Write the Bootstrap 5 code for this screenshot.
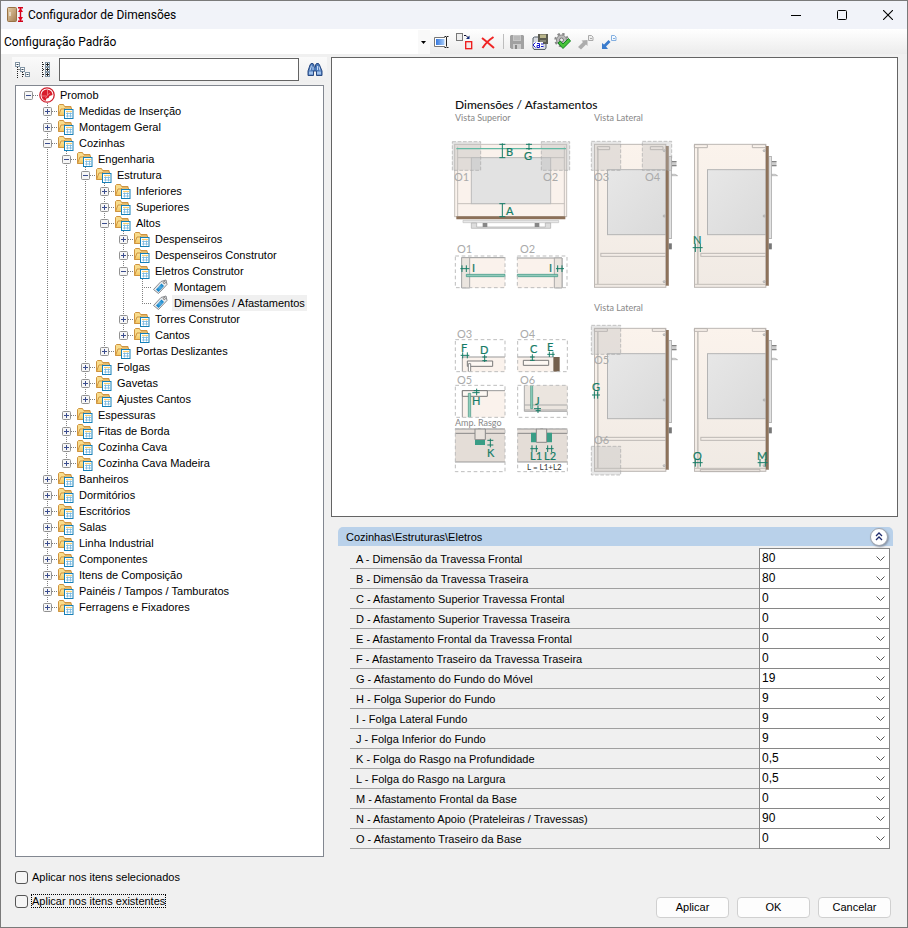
<!DOCTYPE html>
<html lang="pt-BR">
<head>
<meta charset="utf-8">
<meta name="viewport" content="width=device-width, initial-scale=1">
<title>Configurador de Dimensões</title>
<link href="https://cdn.jsdelivr.net/npm/bootstrap@5.3.0/dist/css/bootstrap.min.css" rel="stylesheet">
<style>
  body { font-family: "Liberation Sans", Arial, sans-serif; font-size: 11px; line-height: 16px; color: #000; background: #f0f0f0; }
  .app-window { border: 1px solid #7a7a7a; }
  .title-strip { height: 28px; background: #f1f3f9; font-family: Roboto, sans-serif; font-size: 12px; padding-left: 6px; }
  .title-strip .btn { width: 38px; height: 28px; }
  .btn { --bs-btn-font-size: 11px; --bs-btn-line-height: 16px; }
  .tool-strip { display: grid; grid-template-columns: 429fr 477fr; height: 25px; background: linear-gradient(#fff, #ececec); }
  .config-select { appearance: none; border: 0; border-radius: 0; padding: 0 16px 0 3px; font-family: Roboto, sans-serif; font-size: 12px; line-height: 24px; color: #000; background: #fff url("data:image/svg+xml,%3Csvg xmlns='http://www.w3.org/2000/svg' width='12' height='24'%3E%3Cpath fill='%23f9f9f9' d='M0 0h12v24H0z'/%3E%3Cpath d='M3 11h5L5.500 14z'/%3E%3C/svg%3E") right center no-repeat; }
  .tool-btn { width: 23px; height: 24px; }
  .tool-rule { width: 1px; height: 15px; margin: 0 1px 0 4px; background: #bdbdbd; }
  .work-area { display: grid; grid-template-columns: minmax(0, 309fr) minmax(0, 567fr); gap: 7px; padding: 3px 9px 0 14px; }
  .search-strip { height: 25px; margin: 0 -3px 3px; padding: 1px 3px; background: linear-gradient(#fafafa, #efefef); }
  .search-strip input { height: 23px; border: 1px solid #646464; border-radius: 0; font-size: 11px; padding: 0 4px; }
  .tree-box { background: #fff; border: 1px solid #828790; padding: 1px 0 0 8px; }
  .tree, .tree ul { list-style: none; margin: 0; padding: 0; }
  .tree ul { padding-left: 19px; }
  .tree ul > li { background: repeating-linear-gradient(#808080 0 1px, transparent 1px 2px) 4px 0 / 1px 100% no-repeat; }
  .tree ul > li:last-child { background-size: 1px 8px; }
  .node { display: flex; align-items: center; height: 16px; white-space: nowrap; }
  .node::before { content: ""; order: 2; width: 5px; height: 1px; background: repeating-linear-gradient(90deg, #808080 0 1px, transparent 1px 2px); flex: none; }
  .node.leaf::before { width: 10px; margin-left: 4px; }
  .node .btn { order: 1; width: 9px; height: 9px; flex: none; }
  .node .btn svg { display: block; }
  .node > svg { order: 3; width: 18px; height: 16px; flex: none; margin-right: 2px; }
  .node a { order: 4; color: #000; text-decoration: none; padding: 0 2px; line-height: 16px; }
  .node.active a { background: #f0f0f0; }
  .figure-box { background: #fff; border: 1px solid #646464; }
  .figure-box svg { display: block; width: 100%; height: auto; }
  .group-head { margin: 10px 5px 3px 7px; height: 19px; padding: 0 5px 0 8px; background: #b9d1ea; border-radius: 5px 5px 0 0; }
  .fold-btn { width: 18px; height: 18px; background: #fff; border: 1px solid #9da3ad; border-radius: 9px; box-shadow: 1px 1px 2px #8895a8; }
  .prop-list { margin: 0 8px 0 19px; }
  .prop-row { display: grid; grid-template-columns: 409fr 131fr; height: 20px; border-bottom: 1px solid #a0a0a0; }
  .prop-row label { line-height: 21px; padding-left: 6px; }
  .prop-row select { height: 21px; margin-top: -1px; appearance: none; border: 1px solid #868686; border-radius: 0; padding: 0 16px 1px 2px; font-size: 12px; line-height: 18px; color: #000; background: #fff url("data:image/svg+xml,%3Csvg xmlns='http://www.w3.org/2000/svg' width='9' height='6'%3E%3Cpath d='M.5.500l4 4 4-4' fill='none' stroke='%23555'/%3E%3C/svg%3E") right 4px center no-repeat; }
  .bottom-strip { padding: 13px 16px 9px 14px; }
  .check-stack { gap: 10px; margin-bottom: 10px; }
  .bottom-strip .form-check-input { width: 13px; height: 13px; margin: 0 3px 0 0; border: 1px solid #555; border-radius: 3px; background-color: #f5f5f5; }
  .bottom-strip label { line-height: 12px; border: 1px dotted transparent; }
  .bottom-strip .focused label { border-color: #000; }
  .dlg-btn { width: 73px; height: 21px; line-height: 19px; padding: 0; background: #fdfdfd; border: 1px solid #d0d0d0; border-radius: 4px; color: #000; }
  .fig { font-family: Lato, sans-serif; }
  .fig-title { font-size: 12px; font-weight: 500; fill: #111; }
  .fig-sub { font-size: 9px; fill: #888; }
  .fig-num { font-size: 11px; fill: #aaa; }
  .fig-let { font-size: 11px; fill: #167c66; stroke: #167c66; stroke-width: .2px; }
  .fig-eq { font-size: 8px; fill: #333; }
</style>
<script src="https://cdn.jsdelivr.net/npm/bootstrap@5.3.0/dist/js/bootstrap.bundle.min.js"></script>
</head>
<body>
<svg class="position-absolute" width="0" height="0" aria-hidden="true">
  <defs>
    <linearGradient id="gFace" x1="0" y1="0" x2="0" y2="1"><stop offset="0" stop-color="#fbf3ec"/><stop offset="1" stop-color="#f0eae4"/></linearGradient>
    <linearGradient id="gOven" x1="0" y1="0" x2="1" y2="1"><stop offset="0" stop-color="#e7e7e7"/><stop offset="1" stop-color="#dadada"/></linearGradient>
    <linearGradient id="gFold" x1="0" y1="0" x2="0" y2="1"><stop offset="0" stop-color="#fce9a5"/><stop offset="1" stop-color="#f3c660"/></linearGradient>
    <linearGradient id="gDoor" x1="0" y1="0" x2="1" y2="1"><stop offset="0" stop-color="#e5cfa8"/><stop offset="1" stop-color="#a57d50"/></linearGradient>
    <linearGradient id="gBlue" x1="0" y1="0" x2="1" y2="0"><stop offset="0" stop-color="#3577dd"/><stop offset="1" stop-color="#a9cdf8"/></linearGradient>
    <pattern id="hatch" width="6" height="6" patternUnits="userSpaceOnUse"><path d="M0 0h6v6H0z" fill="#4bab94"/><path d="M0 0l6 6M6 0L0 6" stroke="#16806a"/></pattern>
  </defs>
  <symbol id="minus" viewBox="0 0 9 9"><rect x=".5" y=".5" width="8" height="8" rx="1" fill="#f6f6f6" stroke="#919191"/><path d="M2 4.500h5" stroke="#3b4d8e"/></symbol>
  <symbol id="plus" viewBox="0 0 9 9"><rect x=".5" y=".5" width="8" height="8" rx="1" fill="#f6f6f6" stroke="#919191"/><path d="M2 4.500h5M4.500 2v5" stroke="#3b4d8e"/></symbol>
  <symbol id="folder" viewBox="0 0 18 16">
    <path d="M1.500 12.500v-10l1-1h4l1 2h6.500v4" fill="#f8dc8c" stroke="#cf9440"/>
    <path d="M1.500 12.500l2.500-6.500h3l1-1h6.500v7.500z" fill="url(#gFold)" stroke="#cf9440"/>
    <rect x="7.500" y="6.500" width="8.500" height="9" fill="#fff" stroke="#1680b8"/>
    <path d="M9 8.500h6" stroke="#f6cd70" stroke-width="1.200"/><path d="M9 10.500h6M9 13h6M10.500 9.500v5M13.500 9.500v5" stroke="#72b6df" stroke-width=".8"/>
  </symbol>
  <symbol id="tag" viewBox="0 0 18 16">
    <path d="M1.500 10.500L9 2.500l5-1.500 1 4.500-8.500 9z" fill="#e9ebee" stroke="#87898d"/>
    <path d="M4 10.500l5.500-6 2.500 2.500-5.500 6z" fill="#1687cb"/><path d="M6 9.500l3-3M7 10.500l3-3" stroke="#9bd0f2" stroke-width=".8"/><circle cx="12.300" cy="3.500" r="1" fill="#fff" stroke="#777"/>
  </symbol>
  <symbol id="brand" viewBox="0 0 18 16">
    <circle cx="9" cy="8" r="7.200" fill="#fff" stroke="#cf1f2d" stroke-width="1.300"/>
    <path d="M9.500 2.500c3 .5 5 2.500 5 5.500l-3 1-1 2-2 .5-1 2.500C5 13 3.500 11 3.500 8c0-3 2-5.500 6-5.500z" fill="#d81e2c"/><path d="M9.500 3v5l2.500-2M8 9H4M9.500 8l-2 3" stroke="#f69a9e" stroke-width=".7" fill="none"/>
  </symbol>
  <symbol id="cabinet" viewBox="0 0 260 450" overflow="visible">
    <rect x="1" y="1" width="214" height="429" fill="url(#gFace)" stroke="#bdb8b4" stroke-width="3"/>
    <path d="M1 421h214" stroke="#c3beb9" stroke-width="3"/>
    <path d="M11 12v408" stroke="#c9c4bf" stroke-width="5"/>
    <rect x="40" y="77" width="175" height="195" fill="url(#gOven)" stroke="#b4b4b4" stroke-width="3"/>
    <rect x="20" y="328" width="195" height="9" fill="#f3ede7" stroke="#bdb8b4" stroke-width="3"/>
    <rect x="224" y="37" width="8" height="247" fill="#e3e3e3" stroke="#9c9c9c" stroke-width="2"/>
    <path d="M233 51h14v16h-14z" fill="#ccc"/><path d="M233 53h14M233 65h14" stroke="#777" stroke-width="3"/>
    <path d="M233 91h10l7 4h-17z" fill="#fff" stroke="#999" stroke-width="2"/>
    <path d="M222 298h11v18h-11z" fill="#777"/>
    <path d="M215 6h9v419h-9z" fill="#8b7058"/><path d="M222.500 6v419" stroke="#a99a8c" stroke-width="2"/>
    <g fill="#ddd" stroke="#999" stroke-width="2"><circle cx="210" cy="20" r="3"/><circle cx="210" cy="216" r="3"/><circle cx="210" cy="413" r="3"/></g>
  </symbol>
</svg>

<div class="app-window d-flex flex-column min-vh-100">
  <header class="title-strip d-flex align-items-center">
    <svg width="17" height="16" class="me-1" viewBox="0 0 17 16"><rect x=".5" y=".5" width="9" height="14" rx="1" fill="url(#gDoor)" stroke="#997345"/><path d="M3 5v4" stroke="#fff"/><path d="M11 .7h5M11 14.300h5M13.500 1v13" stroke="#d0021b" stroke-width="1.400"/><path d="M11 5l2.500-4L16 5zM11 10l2.500 4 2.500-4z" fill="#e2001a"/></svg>
    <span class="flex-grow-1">Configurador de Dimensões</span>
    <div class="d-flex gap-2">
      <button class="btn p-0 border-0" aria-label="Minimizar"><svg width="10" height="10" viewBox="0 0 10 10"><path d="M0 5.500h10" stroke="#000"/></svg></button>
      <button class="btn p-0 border-0" aria-label="Maximizar"><svg width="10" height="10" viewBox="0 0 10 10"><rect x=".5" y=".5" width="9" height="9" rx="1" fill="none" stroke="#000"/></svg></button>
      <button class="btn p-0 border-0" aria-label="Fechar"><svg width="10" height="10" viewBox="0 0 10 10"><path d="M0 0l10 10M10 0L0 10" stroke="#000" stroke-width="1.100"/></svg></button>
    </div>
  </header>

  <div class="tool-strip">
    <select class="config-select w-100" aria-label="Configuração"><option>Configuração Padrão</option></select>
    <div class="d-flex align-items-center">
      <button class="btn p-0 border-0 tool-btn" aria-label="Renomear"><svg width="16" height="16" viewBox="0 0 16 16"><path d="M11 3.500H.5v9H11" fill="#fff" stroke="#777"/><path d="M2 5h8.500v6H2z" fill="url(#gBlue)"/><path d="M10.500 2.500h1.500l.5.500.5-.5h1.500M12.500 3v9.500M10.500 13.500H12l.5-.5.5.5h1.500" fill="none" stroke="#222"/></svg></button>
      <button class="btn p-0 border-0 tool-btn" aria-label="Copiar"><svg width="17" height="17" viewBox="0 0 17 17"><rect x=".5" y=".5" width="6" height="7" fill="#eee" stroke="#777"/><path d="M8 2.500h2l2.500 2.500" fill="none" stroke="#113"/><path d="M13.500 2.500V6H10z" fill="#112a7c"/><rect x="9.700" y="8.700" width="6" height="7" fill="#f4e8e8" stroke="#ee1515" stroke-width="1.300"/></svg></button>
      <button class="btn p-0 border-0 tool-btn" aria-label="Excluir"><svg width="14" height="14" viewBox="0 0 14 14"><path d="M1 2c4 3 8 6.500 12 10M12.500 1C8 4 4 8 1.500 12" fill="none" stroke="#f02525" stroke-width="2"/></svg></button>
      <span class="tool-rule"></span>
      <button class="btn p-0 border-0 tool-btn" aria-label="Salvar"><svg width="16" height="16" viewBox="0 0 16 16"><path d="M1 2l1-1h12l1 1v13H2.500L1 13.500z" fill="#a1a1a1"/><path d="M4 1h8v6H4z" fill="#c7c7c7"/><path d="M5 3h6M5 5h6" stroke="#aaa"/><path d="M4 10h8v5H4z" fill="#ccc"/><path d="M6 11h2v4H6z" fill="#888"/></svg></button>
      <button class="btn p-0 border-0 tool-btn" aria-label="Exportar XML"><svg width="16" height="16" viewBox="0 0 16 16"><path d="M1 4l1.500-1H14v11l-1 1.500H2L1 14z" fill="#d8dbe2" stroke="#555e68"/><path d="M6 0h10v10H6z" fill="#5b5b50"/><path d="M8 .5h6V4H8z" fill="#b9b58a"/><path d="M8 6h6v2H8z" fill="#878777"/><path d="M1.500 8h9.500v5.500H1.500z" fill="#fff"/><path d="M3.500 8.500L1 11l2.500 2.500M5 9.500h2.500v4H5v-2h2.500M9 10h2.500M9 12.500h2.500" fill="none" stroke="#1515cf"/></svg></button>
      <button class="btn p-0 border-0 tool-btn" aria-label="Aplicar configuração"><svg width="17" height="17" viewBox="0 0 17 17"><circle cx="7.500" cy="7" r="5" fill="#bbb" stroke="#888"/><circle cx="7.500" cy="7" r="6.200" fill="none" stroke="#888" stroke-width="2" stroke-dasharray="2.400 2.470"/><circle cx="7.500" cy="7" r="2" fill="#eee" stroke="#777"/><path d="M4 10l2.300-2 2.700 3 5.500-5.500 2 2.500L9 15.500z" fill="#48c33a" stroke="#148222"/></svg></button>
      <button class="btn p-0 border-0 tool-btn" aria-label="Enviar"><svg width="16" height="16" viewBox="0 0 16 16"><path d="M0 13l5-5-1.500-1.500L9.500 6v6L8 10.500l-5 5z" fill="#acacac"/><path d="M10.500 1.500h3l1.500 1.500v3.500h-4.500z" fill="#eee" stroke="#aaa"/><path d="M12 4.500h2" stroke="#aaa"/></svg></button>
      <button class="btn p-0 border-0 tool-btn" aria-label="Receber"><svg width="16" height="16" viewBox="0 0 16 16"><path d="M1 15V9l2 1.500L7.500 6l2 2L5 12.500 7 15z" fill="#3b7ccd"/><path d="M10.500 1.500h3l1.500 1.500v3.500h-4.500z" fill="#f5faff" stroke="#83afe0"/><path d="M12 4.500h2" stroke="#83afe0"/></svg></button>
    </div>
  </div>

  <main class="work-area flex-grow-1">
    <section class="d-flex flex-column">
      <div class="search-strip d-flex align-items-center">
        <button class="btn p-0 border-0 d-flex" aria-label="Recolher tudo"><svg width="16" height="16" viewBox="0 0 16 16"><path d="M2.500 5v11M2.500 7.500h3M7.500 10v6M8 12.500h3" stroke="#222" stroke-dasharray="1 1"/><g fill="#fff" stroke="#8295a5"><rect x=".5" y=".5" width="4" height="4"/><rect x="5.500" y="5.500" width="4" height="4"/><rect x="10.500" y="10.500" width="4" height="4"/></g><path d="M1.500 2.500h2M6.500 7.500h2M11.500 12.500h2" stroke="#345"/></svg></button>
        <button class="btn p-0 border-0 d-flex mx-2" aria-label="Expandir tudo"><svg width="12" height="16" viewBox="0 0 12 16"><path d="M3.500 0v16M4 2.500h3M4 7.500h3M4 12.500h3" stroke="#222" stroke-dasharray="1 1"/><g fill="#fff" stroke="#8295a5"><rect x="6.500" y=".5" width="4" height="4"/><rect x="6.500" y="5.500" width="4" height="4"/><rect x="6.500" y="10.500" width="4" height="4"/></g><path d="M7 2.500h3M8.500 1v3M7 7.500h3M8.500 6v3M7 12.500h3M8.500 11v3" stroke="#222"/></svg></button>
        <input type="text" class="form-control flex-grow-1 me-1" aria-label="Pesquisar">
        <button class="btn p-0 border-0 d-flex ms-1" aria-label="Localizar"><svg width="17" height="16" viewBox="0 0 17 16"><path d="M3 3l1-1.500h2L7 3v2h1.500V3l1-1.500h2L12.500 3 15 9v4.500H9.500V9H6.500v4.500H1V9z" fill="#4a78b8" stroke="#2a4a82"/><path d="M4.500 3.500L3 8.500M10.500 4v4M6 4.500V8M12 4.500l1 4" stroke="#c2d8f5"/><path d="M2 11h4M10 11h4" stroke="#9fc1ec" stroke-width="3"/></svg></button>
      </div>
      <nav class="tree-box flex-grow-1" aria-label="Itens">
        <ul class="tree">
          <li><div class="node"><button class="btn p-0 border-0" aria-label="Recolher"><svg width="9" height="9"><use href="#minus"/></svg></button><svg><use href="#brand"/></svg><a href="#">Promob</a></div>
            <ul>
              <li><div class="node"><button class="btn p-0 border-0" aria-label="Expandir"><svg width="9" height="9"><use href="#plus"/></svg></button><svg><use href="#folder"/></svg><a href="#">Medidas de Inserção</a></div></li>
              <li><div class="node"><button class="btn p-0 border-0" aria-label="Expandir"><svg width="9" height="9"><use href="#plus"/></svg></button><svg><use href="#folder"/></svg><a href="#">Montagem Geral</a></div></li>
              <li><div class="node"><button class="btn p-0 border-0" aria-label="Recolher"><svg width="9" height="9"><use href="#minus"/></svg></button><svg><use href="#folder"/></svg><a href="#">Cozinhas</a></div>
                <ul>
                  <li><div class="node"><button class="btn p-0 border-0" aria-label="Recolher"><svg width="9" height="9"><use href="#minus"/></svg></button><svg><use href="#folder"/></svg><a href="#">Engenharia</a></div>
                    <ul>
                      <li><div class="node"><button class="btn p-0 border-0" aria-label="Recolher"><svg width="9" height="9"><use href="#minus"/></svg></button><svg><use href="#folder"/></svg><a href="#">Estrutura</a></div>
                        <ul>
                          <li><div class="node"><button class="btn p-0 border-0" aria-label="Expandir"><svg width="9" height="9"><use href="#plus"/></svg></button><svg><use href="#folder"/></svg><a href="#">Inferiores</a></div></li>
                          <li><div class="node"><button class="btn p-0 border-0" aria-label="Expandir"><svg width="9" height="9"><use href="#plus"/></svg></button><svg><use href="#folder"/></svg><a href="#">Superiores</a></div></li>
                          <li><div class="node"><button class="btn p-0 border-0" aria-label="Recolher"><svg width="9" height="9"><use href="#minus"/></svg></button><svg><use href="#folder"/></svg><a href="#">Altos</a></div>
                            <ul>
                              <li><div class="node"><button class="btn p-0 border-0" aria-label="Expandir"><svg width="9" height="9"><use href="#plus"/></svg></button><svg><use href="#folder"/></svg><a href="#">Despenseiros</a></div></li>
                              <li><div class="node"><button class="btn p-0 border-0" aria-label="Expandir"><svg width="9" height="9"><use href="#plus"/></svg></button><svg><use href="#folder"/></svg><a href="#">Despenseiros Construtor</a></div></li>
                              <li><div class="node"><button class="btn p-0 border-0" aria-label="Recolher"><svg width="9" height="9"><use href="#minus"/></svg></button><svg><use href="#folder"/></svg><a href="#">Eletros Construtor</a></div>
                                <ul>
                                  <li><div class="node leaf"><svg><use href="#tag"/></svg><a href="#">Montagem</a></div></li>
                                  <li><div class="node leaf active"><svg><use href="#tag"/></svg><a href="#">Dimensões / Afastamentos</a></div></li>
                                </ul>
                              </li>
                              <li><div class="node"><button class="btn p-0 border-0" aria-label="Expandir"><svg width="9" height="9"><use href="#plus"/></svg></button><svg><use href="#folder"/></svg><a href="#">Torres Construtor</a></div></li>
                              <li><div class="node"><button class="btn p-0 border-0" aria-label="Expandir"><svg width="9" height="9"><use href="#plus"/></svg></button><svg><use href="#folder"/></svg><a href="#">Cantos</a></div></li>
                            </ul>
                          </li>
                          <li><div class="node"><button class="btn p-0 border-0" aria-label="Expandir"><svg width="9" height="9"><use href="#plus"/></svg></button><svg><use href="#folder"/></svg><a href="#">Portas Deslizantes</a></div></li>
                        </ul>
                      </li>
                      <li><div class="node"><button class="btn p-0 border-0" aria-label="Expandir"><svg width="9" height="9"><use href="#plus"/></svg></button><svg><use href="#folder"/></svg><a href="#">Folgas</a></div></li>
                      <li><div class="node"><button class="btn p-0 border-0" aria-label="Expandir"><svg width="9" height="9"><use href="#plus"/></svg></button><svg><use href="#folder"/></svg><a href="#">Gavetas</a></div></li>
                      <li><div class="node"><button class="btn p-0 border-0" aria-label="Expandir"><svg width="9" height="9"><use href="#plus"/></svg></button><svg><use href="#folder"/></svg><a href="#">Ajustes Cantos</a></div></li>
                    </ul>
                  </li>
                  <li><div class="node"><button class="btn p-0 border-0" aria-label="Expandir"><svg width="9" height="9"><use href="#plus"/></svg></button><svg><use href="#folder"/></svg><a href="#">Espessuras</a></div></li>
                  <li><div class="node"><button class="btn p-0 border-0" aria-label="Expandir"><svg width="9" height="9"><use href="#plus"/></svg></button><svg><use href="#folder"/></svg><a href="#">Fitas de Borda</a></div></li>
                  <li><div class="node"><button class="btn p-0 border-0" aria-label="Expandir"><svg width="9" height="9"><use href="#plus"/></svg></button><svg><use href="#folder"/></svg><a href="#">Cozinha Cava</a></div></li>
                  <li><div class="node"><button class="btn p-0 border-0" aria-label="Expandir"><svg width="9" height="9"><use href="#plus"/></svg></button><svg><use href="#folder"/></svg><a href="#">Cozinha Cava Madeira</a></div></li>
                </ul>
              </li>
              <li><div class="node"><button class="btn p-0 border-0" aria-label="Expandir"><svg width="9" height="9"><use href="#plus"/></svg></button><svg><use href="#folder"/></svg><a href="#">Banheiros</a></div></li>
              <li><div class="node"><button class="btn p-0 border-0" aria-label="Expandir"><svg width="9" height="9"><use href="#plus"/></svg></button><svg><use href="#folder"/></svg><a href="#">Dormitórios</a></div></li>
              <li><div class="node"><button class="btn p-0 border-0" aria-label="Expandir"><svg width="9" height="9"><use href="#plus"/></svg></button><svg><use href="#folder"/></svg><a href="#">Escritórios</a></div></li>
              <li><div class="node"><button class="btn p-0 border-0" aria-label="Expandir"><svg width="9" height="9"><use href="#plus"/></svg></button><svg><use href="#folder"/></svg><a href="#">Salas</a></div></li>
              <li><div class="node"><button class="btn p-0 border-0" aria-label="Expandir"><svg width="9" height="9"><use href="#plus"/></svg></button><svg><use href="#folder"/></svg><a href="#">Linha Industrial</a></div></li>
              <li><div class="node"><button class="btn p-0 border-0" aria-label="Expandir"><svg width="9" height="9"><use href="#plus"/></svg></button><svg><use href="#folder"/></svg><a href="#">Componentes</a></div></li>
              <li><div class="node"><button class="btn p-0 border-0" aria-label="Expandir"><svg width="9" height="9"><use href="#plus"/></svg></button><svg><use href="#folder"/></svg><a href="#">Itens de Composição</a></div></li>
              <li><div class="node"><button class="btn p-0 border-0" aria-label="Expandir"><svg width="9" height="9"><use href="#plus"/></svg></button><svg><use href="#folder"/></svg><a href="#">Painéis / Tampos / Tamburatos</a></div></li>
              <li><div class="node"><button class="btn p-0 border-0" aria-label="Expandir"><svg width="9" height="9"><use href="#plus"/></svg></button><svg><use href="#folder"/></svg><a href="#">Ferragens e Fixadores</a></div></li>
            </ul>
          </li>
        </ul>
      </nav>
    </section>

    <section class="d-flex flex-column">
      <div class="figure-box">
        <svg class="fig" viewBox="332 58 565 458" role="img" aria-label="Diagrama de dimensões e afastamentos">
          <!-- top view and corner details 01 and 02 -->
          <g transform="translate(445 90) scale(.33333)" fill="none" stroke-width="3">
            <rect x="29" y="163" width="336" height="217" fill="#faf2ec" stroke="#c5c0bc"/>
            <path d="M38 170v208M358 170v208" stroke="#c5c0bc"/>
            <path d="M38 203h320M38 341h320" stroke="#c5c0bc"/>
            <rect x="79" y="203" width="238" height="138" fill="#e2e2e2" stroke="#bbb"/>
            <g fill="#bbb" fill-opacity=".4" stroke="#a9a9a9" stroke-width="2" stroke-dasharray="11 5"><rect x="22" y="155" width="85" height="86"/><rect x="289" y="155" width="85" height="86"/></g>
            <path d="M34 176h329" stroke="#62b9a4" stroke-width="4"/>
            <path d="M34 379h327v9H34z" fill="#8c7058"/>
            <path d="M54 391h287v7H54z" fill="#e8e8e8" stroke="#c0c0c0" stroke-width="2"/>
            <path d="M79 399h16v12h206v-12h16v16H79z" fill="#ddd" stroke="#aaa" stroke-width="2"/><path d="M113 399h14v12h-14zM269 399h14v12h-14z" fill="#888"/>
            <g stroke="#167c66"><path d="M172 160v43M163 163h18M163 203h18M252 160v20M243 163h18M243 176h18M172 341v39M163 341h18M163 380h18"/></g>
            <path d="M50 503h130v91H50z" fill="#faf2ec"/><path d="M50 594v-91h130" stroke="#999"/><path d="M50 503h24v91H50z" fill="#ebe5df" stroke="#aaa"/>
            <path d="M217 504h134v90H217z" fill="#faf2ec"/><path d="M351 594v-90H217" stroke="#999"/><path d="M328 504h23v90h-23z" fill="#ebe5df" stroke="#aaa"/>
            <path d="M64 553h116v7H64zM217 553h121v7H217z" fill="#91cbbb" stroke="#35917d" stroke-width="2"/>
            <path d="M46 536h27M51 526v20M64 526v20M333 536h24M338 526v20M351 526v20" stroke="#167c66"/>
            <g stroke="#bdbdbd" stroke-dasharray="11 8"><rect x="31" y="498" width="149" height="95"/><rect x="217" y="498" width="149" height="95"/></g>
          </g>
          <!-- side views -->
          <g>
            <use href="#cabinet" x="594" y="144" width="87" height="150"/>
            <use href="#cabinet" x="694" y="144" width="87" height="150"/>
            <use href="#cabinet" x="594" y="328" width="87" height="150"/>
            <use href="#cabinet" x="694" y="328" width="87" height="150"/>
          </g>
          <g transform="translate(580 90) scale(.33333)" fill="none" stroke-width="3" stroke="#b9b4b0">
            <path d="M52 170h37v9H52zM211 170h38v9h-38zM343 164h39v9h-39zM517 164h40v9h-40zM43 716h39v8H43zM217 716h40v8h-40zM343 716h39v8h-39zM517 716h40v8h-40zM361 1138h179v7H361z"/>
            <g fill="#bbb" fill-opacity=".35" stroke="#a9a9a9" stroke-width="2" stroke-dasharray="11 5"><rect x="34" y="154" width="88" height="87"/><rect x="187" y="154" width="88" height="87"/><rect x="34" y="706" width="88" height="87"/><rect x="34" y="1069" width="88" height="86"/></g>
            <g stroke="#167c66"><path d="M338 473h30M346 461v25M361 461v25M36 915h24M43 904v22M53 904v22M338 1118h30M346 1107v23M361 1107v23M533 1118h30M540 1107v23M556 1107v23"/></g>
          </g>
          <!-- details 03 to 06 and groove width -->
          <g transform="translate(445 295) scale(.33333)" fill="none" stroke-width="3">
            <path d="M52 186h128v44H52zM217 186h108v44H217zM52 287h128v80H52z" fill="#faf2ec"/>
            <path d="M52 230v-44h128M217 186h108M52 367v-80h128" stroke="#999"/>
            <path d="M67 198h76v16H67zM235 196h76v15h-76zM52 287h75v17H52z" fill="#fdf8f3" stroke="#777"/>
            <path d="M70 230v-24h7v24" fill="#fff" stroke="#888"/>
            <path d="M325 186h19v44h-19z" fill="#75604d"/>
            <path d="M238 271h129v78H238" fill="#ebe5df"/><path d="M238 271v78h129M238 330h129M238 345h129" stroke="#aaa"/>
            <path d="M70 367v-72h7v72M257 271v70h6v-70" fill="#8ed0be" stroke="#45917e" stroke-width="2"/>
            <path d="M30 401h150v100H30zM217 401h150v100H217z" fill="#e4ddd7"/>
            <path d="M30 415h60M121 415h59M217 415h57M305 415h62" stroke="#888"/><path d="M30 402h150M217 402h150M30 501h150M217 501h150" stroke="#999"/>
            <path d="M90 402h31v32H90zM274 402h31v40h-31z" fill="#e9e3dd" stroke="#888"/>
            <path d="M90 435h30v15H90zM258 413h15v29h-15zM306 413h15v29h-15z" fill="url(#hatch)"/>
            <g stroke="#bdbdbd" stroke-dasharray="11 8"><rect x="31" y="134" width="149" height="96"/><rect x="218" y="134" width="149" height="96"/><rect x="31" y="271" width="149" height="96"/><rect x="218" y="271" width="149" height="96"/><rect x="31" y="401" width="149" height="129"/><rect x="218" y="401" width="149" height="129"/></g>
            <path d="M47 181h26M53 172v18M67 172v18M119 179v22M112 186h14M112 197h14M262 178v20M255 186h14M255 196h14M307 178h22M313 170v16M324 170v16M82 293h22M95 281v20M86 287h18M279 332v22M267 341h21M272 347h15M136 431v26M127 436h18M127 450h18M256 461h23M261 451v20M274 451v20M303 461h23M308 451v20M320 451v20" stroke="#167c66"/>
          </g>
          <text class="fig-title" x="455" y="109">Dimensões / Afastamentos</text>
          <g class="fig-sub"><text x="455" y="121">Vista Superior</text><text x="594" y="121">Vista Lateral</text><text x="594" y="311">Vista Lateral</text><text x="455" y="426">Amp. Rasgo</text></g>
          <g class="fig-num"><text x="454" y="181">O1</text><text x="543" y="181">O2</text><text x="594" y="181">O3</text><text x="645" y="181">O4</text><text x="457" y="253">O1</text><text x="520" y="253">O2</text><text x="457" y="338">O3</text><text x="520" y="338">O4</text><text x="457" y="384">O5</text><text x="520" y="384">O6</text><text x="594" y="364">O5</text><text x="594" y="444">O6</text></g>
          <g class="fig-let"><text x="506" y="156">B</text><text x="524" y="160">G</text><text x="506" y="215">A</text><text x="472" y="272">I</text><text x="549" y="272">I</text><text x="693" y="244">N</text><text x="592" y="391">G</text><text x="693" y="460">O</text><text x="757" y="460">M</text><text x="461" y="352">F</text><text x="480" y="354">D</text><text x="530" y="353">C</text><text x="547" y="351">E</text><text x="472" y="405">H</text><text x="535" y="405">J</text><text x="487" y="457">K</text><text x="530" y="460">L1</text><text x="544" y="460">L2</text></g>
          <text class="fig-eq" x="527" y="470">L = L1+L2</text>
        </svg>
      </div>

      <div class="group-head d-flex align-items-center justify-content-between">
        <span>Cozinhas\Estruturas\Eletros</span>
        <button class="btn p-0 fold-btn d-flex align-items-center justify-content-center" aria-label="Recolher grupo"><svg width="8" height="9" viewBox="0 0 8 9"><path d="M1 4l3-3 3 3M1 8l3-3 3 3" fill="none" stroke="#1f2c6d" stroke-width="1.300"/></svg></button>
      </div>
      <div class="prop-list">
        <div class="prop-row"><label for="pA">A - Dimensão da Travessa Frontal</label><select id="pA"><option>80</option></select></div>
        <div class="prop-row"><label for="pB">B - Dimensão da Travessa Traseira</label><select id="pB"><option>80</option></select></div>
        <div class="prop-row"><label for="pC">C - Afastamento Superior Travessa Frontal</label><select id="pC"><option>0</option></select></div>
        <div class="prop-row"><label for="pD">D - Afastamento Superior Travessa Traseira</label><select id="pD"><option>0</option></select></div>
        <div class="prop-row"><label for="pE">E - Afastamento Frontal da Travessa Frontal</label><select id="pE"><option>0</option></select></div>
        <div class="prop-row"><label for="pF">F - Afastamento Traseiro da Travessa Traseira</label><select id="pF"><option>0</option></select></div>
        <div class="prop-row"><label for="pG">G - Afastamento do Fundo do Móvel</label><select id="pG"><option>19</option></select></div>
        <div class="prop-row"><label for="pH">H - Folga Superior do Fundo</label><select id="pH"><option>9</option></select></div>
        <div class="prop-row"><label for="pI">I - Folga Lateral Fundo</label><select id="pI"><option>9</option></select></div>
        <div class="prop-row"><label for="pJ">J - Folga Inferior do Fundo</label><select id="pJ"><option>9</option></select></div>
        <div class="prop-row"><label for="pK">K - Folga do Rasgo na Profundidade</label><select id="pK"><option>0,5</option></select></div>
        <div class="prop-row"><label for="pL">L - Folga do Rasgo na Largura</label><select id="pL"><option>0,5</option></select></div>
        <div class="prop-row"><label for="pM">M - Afastamento Frontal da Base</label><select id="pM"><option>0</option></select></div>
        <div class="prop-row"><label for="pN">N - Afastamento Apoio (Prateleiras / Travessas)</label><select id="pN"><option>90</option></select></div>
        <div class="prop-row"><label for="pO">O - Afastamento Traseiro da Base</label><select id="pO"><option>0</option></select></div>
      </div>
    </section>
  </main>

  <footer class="bottom-strip d-flex justify-content-between align-items-end">
    <div class="check-stack d-flex flex-column">
      <div class="d-flex align-items-center"><input class="form-check-input" type="checkbox" id="cSel"><label for="cSel">Aplicar nos itens selecionados</label></div>
      <div class="d-flex align-items-center focused"><input class="form-check-input" type="checkbox" id="cEx"><label for="cEx">Aplicar nos itens existentes</label></div>
    </div>
    <div class="d-flex gap-2">
      <button class="btn dlg-btn">Aplicar</button>
      <button class="btn dlg-btn">OK</button>
      <button class="btn dlg-btn">Cancelar</button>
    </div>
  </footer>
</div>
</body>
</html>
